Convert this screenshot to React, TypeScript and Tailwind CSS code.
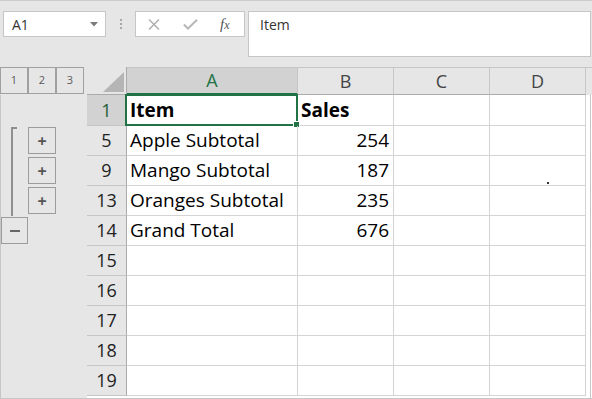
import React from 'react';

type Row = { n: number; a?: string; b?: string; bold?: boolean; numeric?: boolean };

const ROWS: Row[] = [
  { n: 1, a: 'Item', b: 'Sales', bold: true },
  { n: 5, a: 'Apple Subtotal', b: '254', numeric: true },
  { n: 9, a: 'Mango Subtotal', b: '187', numeric: true },
  { n: 13, a: 'Oranges Subtotal', b: '235', numeric: true },
  { n: 14, a: 'Grand Total', b: '676', numeric: true },
  { n: 15 },
  { n: 16 },
  { n: 17 },
  { n: 18 },
  { n: 19 },
];

const COLS = ['A', 'B', 'C', 'D'];

const PlusBox = () => (
  <div className="w-[28px] h-[27px] border border-[#9c9c9c] flex items-center justify-center text-[#555] text-[16px] font-bold leading-none">
    +
  </div>
);

const App = () => {
  return (
    <div className="w-[592px] h-[399px] bg-[#e6e6e6] overflow-hidden relative border-b border-[#c6c6c6] font-['Open_Sans',sans-serif] flex flex-col">
      {/* formula bar */}
      <div className="h-[67px] shrink-0 border-t border-[#cdcdcd] pt-[10px] flex items-start">
        <div className="ml-[3px] w-[103px] h-[26px] bg-white border border-[#c6c6c6] flex items-center pl-[8px] pr-[7px] text-[14px] text-[#333]">
          <span>A1</span>
          <svg className="ml-auto" width="8" height="5" viewBox="0 0 8 5">
            <polygon points="0,0 8,0 4,4.5" fill="#7a7a7a" />
          </svg>
        </div>
        <div className="ml-[14px] mt-[8px] flex flex-col gap-[2px]">
          <div className="w-[2px] h-[2px] bg-[#a8a8a8]" />
          <div className="w-[2px] h-[2px] bg-[#a8a8a8]" />
          <div className="w-[2px] h-[2px] bg-[#a8a8a8]" />
        </div>
        <div className="ml-[13px] w-[110px] h-[26px] bg-white border border-[#c6c6c6] flex items-center">
          <svg className="ml-[12px]" width="12" height="11" viewBox="0 0 12 11">
            <path d="M1 0.5 L11 10.5 M11 0.5 L1 10.5" stroke="#b0b0b0" strokeWidth="1.5" />
          </svg>
          <svg className="ml-[23px]" width="15" height="11" viewBox="0 0 15 11">
            <path d="M0.8 5.5 L5 9.5 L14 0.8" stroke="#b8b8b8" strokeWidth="2" fill="none" />
          </svg>
          <span className="ml-[22px] italic font-['Liberation_Serif',serif] text-[15px] text-[#555] leading-none">
            f<span className="text-[12px]">x</span>
          </span>
        </div>
        <div className="ml-[3px] w-[343px] h-[46px] bg-white border border-[#c6c6c6] pl-[11px] pt-[3px] text-[14px] leading-[20px] text-[#333]">
          Item
        </div>
      </div>

      {/* sheet */}
      <div className="flex-1 flex">
        {/* outline panel */}
        <div className="w-[87px] shrink-0 flex flex-col">
          <div className="h-[28px] flex items-start">
            {['1', '2', '3'].map((l) => (
              <div
                key={l}
                className="w-[28px] h-[27px] border border-[#a0a0a0] flex items-center justify-center text-[11px] text-[#5a5a5a]"
              >
                {l}
              </div>
            ))}
          </div>
          <div className="flex-1 border-l border-[#c6c6c6]">
            <div className="h-[31px]" />
            <div className="h-[90px] flex">
              <div className="ml-[10px] mt-[1px] w-[6px] h-[89px] border-l-2 border-t-2 border-[#8f8f8f]" />
              <div className="ml-[11px] pt-[1px] flex flex-col gap-[3px]">
                <PlusBox />
                <PlusBox />
                <PlusBox />
              </div>
            </div>
            <div className="h-[30px] pt-[1px]">
              <div className="w-[27px] h-[27px] border border-[#9c9c9c] flex items-center justify-center">
                <div className="w-[10px] h-[2px] bg-[#666]" />
              </div>
            </div>
          </div>
        </div>

        {/* grid */}
        <div className="w-[499px] shrink-0 flex flex-col bg-white">
          <div className="grid grid-cols-[40px_171px_96px_96px_96px] text-[#222]">
            {/* header row */}
            <div className="h-[28px] bg-[#e6e6e6] border-r border-b border-[#ababab] flex items-end justify-end pr-[2px] pb-[2px]">
              <svg width="21" height="20" viewBox="0 0 21 20">
                <polygon points="21,0 21,20 0,20" fill="#b5b5b5" />
              </svg>
            </div>
            {COLS.map((c) => (
              <div
                key={c}
                className={
                  c === 'A'
                    ? 'h-[28px] bg-[#d2d2d2] border-t border-r border-b-2 border-t-[#c6c6c6] border-r-[#c6c6c6] border-b-[#217346] flex items-center justify-center text-[18px] text-[#217346]'
                    : 'h-[28px] bg-[#e6e6e6] border-t border-r border-b border-[#c6c6c6] border-b-[#ababab] flex items-center justify-center text-[18px] text-[#444]'
                }
              >
                {c}
              </div>
            ))}

            {ROWS.map((r) => {
              const h = r.n === 1 ? 'h-[31px]' : 'h-[30px]';
              return (
                <React.Fragment key={r.n}>
                  <div
                    className={`${h} ${
                      r.n === 1 ? 'bg-[#d2d2d2] text-[#1f5c3a]' : 'bg-[#e6e6e6] text-[#222]'
                    } border-r border-b border-[#c6c6c6] border-r-[#ababab] flex items-center justify-center text-[18px]`}
                  >
                    {r.n}
                  </div>
                  <div
                    className={`${h} relative border-r border-b border-[#d4d4d4] flex items-center pl-[3px] text-[19px] text-black whitespace-nowrap ${
                      r.bold ? 'font-bold' : ''
                    }`}
                  >
                    {r.a}
                    {r.n === 1 && (
                      <div className="absolute -left-[2px] -top-[1px] -right-[1px] -bottom-[1px] border-2 border-[#217346]">
                        <div className="absolute -right-[4px] -bottom-[4px] w-[7px] h-[7px] bg-[#217346] border border-white" />
                      </div>
                    )}
                  </div>
                  <div
                    className={`${h} border-r border-b border-[#d4d4d4] flex items-center text-[19px] text-black whitespace-nowrap ${
                      r.numeric ? 'justify-end pr-[4px]' : 'pl-[3px]'
                    } ${r.bold ? 'font-bold' : ''}`}
                  >
                    {r.b}
                  </div>
                  <div className={`${h} border-r border-b border-[#d4d4d4]`} />
                  <div className={`${h} relative border-r border-b border-[#d4d4d4]`}>
                    {r.n === 9 && <div className="absolute left-[57px] bottom-[1px] w-[2px] h-[2px] bg-[#333]" />}
                  </div>
                </React.Fragment>
              );
            })}
          </div>
        </div>

        {/* right edge */}
        <div className="w-[6px] shrink-0 flex flex-col">
          <div className="h-[28px] bg-[#e6e6e6] border-t border-[#c6c6c6]" />
          <div className="flex-1 bg-white">
            <div className="w-[5px] h-full border-r border-[#c6c6c6]" />
          </div>
        </div>
      </div>
    </div>
  );
};

export default App;
